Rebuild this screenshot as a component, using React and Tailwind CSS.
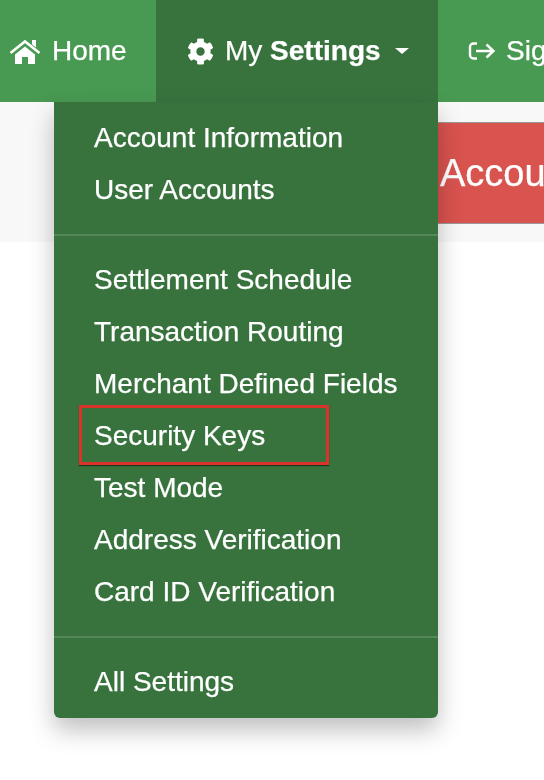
import { FaCog } from 'react-icons/fa';

const groups = [
  ['Account Information', 'User Accounts'],
  ['Settlement Schedule', 'Transaction Routing', 'Merchant Defined Fields', 'Security Keys', 'Test Mode', 'Address Verification', 'Card ID Verification'],
  ['All Settings'],
];

function HomeIcon() {
  return (
    <svg viewBox="0 0 32 25" className="h-[25px] w-[32px] shrink-0" fill="white">
      <path d="M1.5 14 16 2.5 30.5 14" fill="none" stroke="white" strokeWidth="2.6" />
      <path d="M23 1h4v7.5l-4-3z" />
      <path d="M6 15.5 16 7.5l10 8V25h-7v-7h-6v7H6z" />
    </svg>
  );
}

function SignIcon() {
  return (
    <svg viewBox="0 0 28 18" className="h-[18px] w-[28px] shrink-0" fill="none" stroke="white" strokeWidth="2.4">
      <path d="M9 1.5H5.5a3.5 3.5 0 0 0-3.5 3.5v8a3.5 3.5 0 0 0 3.5 3.5H9" />
      <path d="M8 9h17M18.5 2.5 25.5 9l-7 6.5" />
    </svg>
  );
}

export default function App() {
  return (
    <div className="relative w-[544px] h-[780px] overflow-hidden bg-white font-['Liberation_Sans',Arial,sans-serif] text-[28px] text-white [-webkit-text-stroke:0.25px_white] blur-[0.6px]">
      <nav className="relative z-10 flex h-[102px] bg-[#489952]">
        <a className="flex w-[156px] shrink-0 items-center pl-[9px]">
          <HomeIcon />
          <span className="ml-[11px]">Home</span>
        </a>
        <div className="relative flex w-[282px] shrink-0 items-center whitespace-nowrap bg-[#38733e] pl-[31px]">
          <FaCog className="h-[27px] w-[27px] shrink-0" />
          <span className="ml-[11px]">My <b>Settings</b></span>
          <span className="ml-[14px] h-0 w-0 border-x-[7px] border-t-[6px] border-x-transparent border-t-white" />
          <div className="absolute left-[-102px] top-[102px] w-[384px] rounded-b-[6px] bg-[#38733e] py-[10px] shadow-[0_12px_24px_rgba(0,0,0,0.25)]">
            {groups.map((items, i) => (
              <div key={i}>
                {i > 0 && <div className="my-[18px] h-[2px] bg-[#56875b]" />}
                {items.map(item => (
                  <a key={item} className="block h-[52px] pl-[40px] leading-[52px] whitespace-nowrap">
                    {item}
                  </a>
                ))}
              </div>
            ))}
            <div className="absolute left-[25px] top-[303px] h-[60px] w-[250px] border-[3px] border-[#d9342b] shadow-[0_1px_1px_rgba(0,0,0,0.5)]" />
          </div>
        </div>
        <a className="flex shrink-0 items-center pl-[30px] whitespace-nowrap">
          <SignIcon />
          <span className="ml-[10px]">Sign Out</span>
        </a>
      </nav>
      <div className="flex h-[140px] items-start overflow-hidden bg-[#f8f8f8] pl-[420px] pt-[20px]">
        <div className="flex h-[102px] shrink-0 items-center border-y border-[#999999] bg-[#d9534f] pl-[20px] pr-[20px] text-[38px] whitespace-nowrap">
          Account
        </div>
      </div>
    </div>
  );
}
